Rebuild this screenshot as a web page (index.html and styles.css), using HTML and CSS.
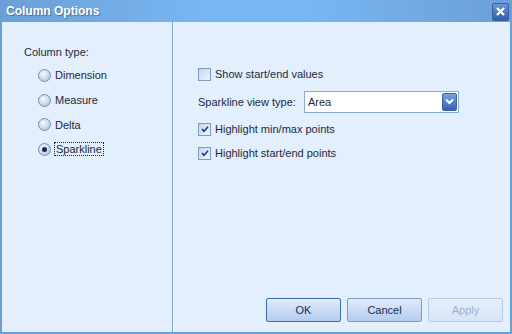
FILE: index.html
```html
<!DOCTYPE html>
<html lang="en">
<head>
    <meta charset="UTF-8">
    <title>Column Options</title>
    <link rel="stylesheet" href="styles.css">
</head>
<body>
    <div class="dialog">
        <div class="titlebar">
            <span class="title">Column Options</span>
            <span class="close">
                <svg width="9" height="9" viewBox="0 0 9 9"><path d="M1 1L8 8M8 1L1 8" stroke="#fff" stroke-width="2.4"/></svg>
            </span>
        </div>
        <div class="content">
            <div class="left-panel">
                <div class="group-label">Column type:</div>
                <div class="radio-row"><span class="radio"></span><span>Dimension</span></div>
                <div class="radio-row"><span class="radio"></span><span>Measure</span></div>
                <div class="radio-row"><span class="radio"></span><span>Delta</span></div>
                <div class="radio-row"><span class="radio checked"></span><span class="focused">Sparkline</span></div>
            </div>
            <div class="divider"></div>
            <div class="right-panel">
                <div class="options">
                    <div class="check-row"><span class="checkbox"></span><span>Show start/end values</span></div>
                    <div class="select-row">
                        <span class="select-label">Sparkline view type:</span>
                        <div class="select">
                            <span class="select-value">Area</span>
                            <span class="select-btn">
                                <svg width="9" height="7" viewBox="0 0 9 7"><path d="M1 1.5L4.5 5L8 1.5" fill="none" stroke="#fff" stroke-width="2"/></svg>
                            </span>
                        </div>
                    </div>
                    <div class="check-row"><span class="checkbox checked"><svg width="10" height="10" viewBox="0 0 10 10"><path d="M2 5L4 7.2L8 2.8" fill="none" stroke="#1f3d8a" stroke-width="1.6"/></svg></span><span>Highlight min/max points</span></div>
                    <div class="check-row"><span class="checkbox checked"><svg width="10" height="10" viewBox="0 0 10 10"><path d="M2 5L4 7.2L8 2.8" fill="none" stroke="#1f3d8a" stroke-width="1.6"/></svg></span><span>Highlight start/end points</span></div>
                </div>
                <div class="buttons">
                    <button class="btn default">OK</button>
                    <button class="btn">Cancel</button>
                    <button class="btn" disabled>Apply</button>
                </div>
            </div>
        </div>
    </div>
</body>
</html>
```
FILE: styles.css
```css
body {
    margin: 0;
    padding: 0;
    font-family: "Liberation Sans", Arial, sans-serif;
    font-size: 11px;
    color: #1b2a3c;
}
.dialog {
    width: 512px;
    height: 334px;
    display: flex;
    flex-direction: column;
    box-sizing: border-box;
    background-color: #e3effd;
}
.titlebar {
    height: 22px;
    display: flex;
    align-items: center;
    justify-content: space-between;
    padding: 0 3px 0 6px;
    background: linear-gradient(to right, #6b9fd7 0%, #78b6f2 40%, #78b6f2 60%, #6b9fd7 100%);
}
.title {
    color: #fff;
    font-weight: bold;
    font-size: 12px;
    text-shadow: 1px 1px 1px #4a6e9e;
}
.close {
    width: 15px;
    height: 16px;
    display: flex;
    align-items: center;
    justify-content: center;
    border-radius: 2px;
    border: 1px solid #3a5fa0;
    background: linear-gradient(to bottom, #6b96dc, #2f5cae);
    margin-top: 1px;
}
.content {
    flex: 1;
    display: flex;
    border-left: 2px solid #6b9fd7;
    border-right: 2px solid #6b9fd7;
    border-bottom: 2px solid #6b9fd7;
}
.left-panel {
    width: 170px;
    padding: 23px 0 0 22px;
    box-sizing: border-box;
}
.group-label {
    line-height: 14px;
    margin-bottom: 4px;
}
.radio-row {
    display: flex;
    align-items: center;
    gap: 4px;
    height: 24.7px;
    padding-left: 14px;
}
.radio {
    width: 11px;
    height: 11px;
    border-radius: 50%;
    border: 1px solid #7690b5;
    background: radial-gradient(circle at 40% 35%, #f4f8fd 0%, #c6d8ee 55%, #9fb9db 100%);
    display: flex;
    align-items: center;
    justify-content: center;
}
.radio.checked::after {
    content: "";
    width: 5px;
    height: 5px;
    border-radius: 50%;
    background: #1c2a44;
}
.focused {
    outline: 1px dotted #222;
    padding: 0 1px;
}
.divider {
    width: 1px;
    background: #7aa3d6;
    border-right: 1px solid #f4f9ff;
}
.right-panel {
    flex: 1;
    display: flex;
    flex-direction: column;
    justify-content: space-between;
    padding: 40px 7px 10px 24px;
}
.options {
    display: flex;
    flex-direction: column;
}
.check-row {
    display: flex;
    align-items: center;
    gap: 4px;
    height: 24px;
}
.checkbox {
    width: 11px;
    height: 11px;
    border: 1px solid #7d9ac0;
    background: linear-gradient(135deg, #c3d6ee, #eef4fc);
    display: flex;
    align-items: center;
    justify-content: center;
}
.select-row {
    display: flex;
    align-items: center;
    height: 31px;
}
.select-label {
    width: 106px;
}
.select {
    width: 150px;
    height: 20px;
    border: 1px solid #87acd9;
    background: #fff;
    display: flex;
    align-items: center;
    justify-content: space-between;
    padding-left: 3px;
}
.select-btn {
    width: 13px;
    height: 16px;
    margin-right: 1px;
    border-radius: 2px;
    border: 1px solid #3a63a6;
    background: linear-gradient(to bottom, #7aa2e0, #3663b4);
    display: flex;
    align-items: center;
    justify-content: center;
}
.buttons {
    display: flex;
    justify-content: flex-end;
    gap: 6px;
}
.btn {
    width: 75px;
    height: 24px;
    font-family: "Liberation Sans", Arial, sans-serif;
    font-size: 11px;
    color: #1b2a4a;
    border: 1px solid #7d99c4;
    border-radius: 2px;
    background: linear-gradient(to bottom, #e2ecf9 0%, #c9dcf4 50%, #b3cdef 100%);
}
.btn.default {
    border-color: #3e6ab0;
}
.btn:disabled {
    color: #9db2cf;
    border-color: #b6cbe6;
    background: linear-gradient(to bottom, #e6eefa, #d6e4f6);
}
```
